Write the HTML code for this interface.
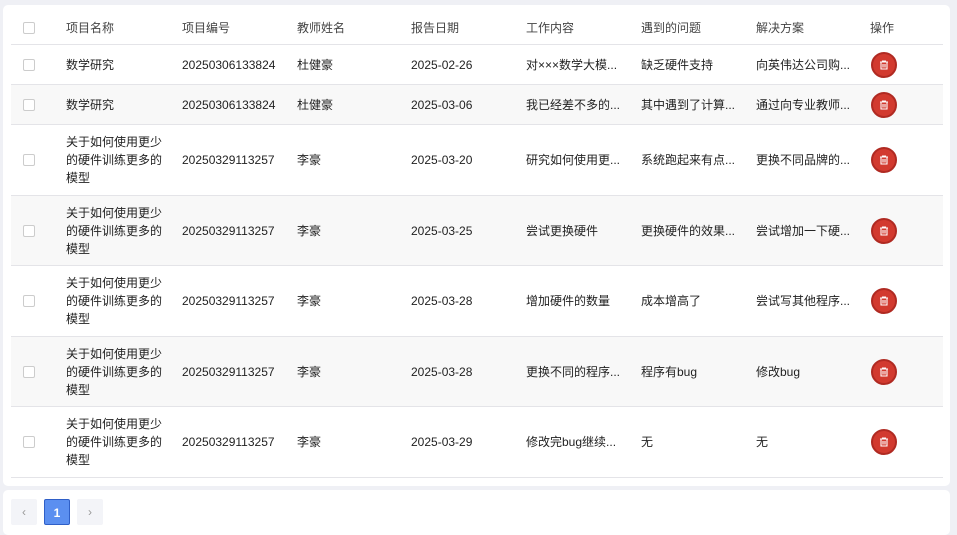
<!DOCTYPE html>
<html><head><meta charset="utf-8"><style>
*{box-sizing:border-box;margin:0;padding:0}
body{width:957px;height:527px;background:#eff0f5;font-family:"Liberation Sans","Noto Sans CJK SC",sans-serif;font-size:12px;color:#222;position:relative;overflow:hidden}
.card{position:absolute;left:3px;top:5px;width:947px;height:481px;background:#fff;border-radius:5px}
.pg{position:absolute;left:3px;top:490px;width:947px;height:45px;background:#fff;border-radius:5px}
.row{position:absolute;left:11px;width:932px;border-bottom:1px solid #e4e4e8}
.row.s{background:#f8f8f8}
.c{position:absolute;top:50%;transform:translateY(-50%);line-height:18px;white-space:nowrap}
.h .c{color:#444}
.cb{position:absolute;left:12px;top:50%;margin-top:-6px;width:12px;height:12px;border:1px solid #ccc;border-radius:2px;background:#fff}
.del{position:absolute;left:860px;top:50%;margin-top:-13px;width:26px;height:26px;border-radius:50%;background:#d23a2f;border:2px solid #b02a22}
.del svg{position:absolute;left:6px;top:6px}
.btn{position:absolute;top:9px;width:26px;height:26px;background:#f3f4f8;border-radius:2px;color:#999;text-align:center;line-height:26px;font-size:12px}
</style></head><body>
<div class="card"></div>
<div id="t"></div>
<div class="pg">
<div class="btn" style="left:8px">‹</div>
<div class="btn" style="left:41px;background:#5b8ff0;border:1px solid #2f5fc7;color:#fff;font-weight:bold">1</div>
<div class="btn" style="left:74px">›</div>
</div>
<script>
const X=[55,171,286,400,515,630,745];
const rows=[
["数学研究","20250306133824","杜健豪","2025-02-26","对×××数学大模...","缺乏硬件支持","向英伟达公司购..."],
["数学研究","20250306133824","杜健豪","2025-03-06","我已经差不多的...","其中遇到了计算...","通过向专业教师..."],
["关于如何使用更少<br>的硬件训练更多的<br>模型","20250329113257","李豪","2025-03-20","研究如何使用更...","系统跑起来有点...","更换不同品牌的..."],
["关于如何使用更少<br>的硬件训练更多的<br>模型","20250329113257","李豪","2025-03-25","尝试更换硬件","更换硬件的效果...","尝试增加一下硬..."],
["关于如何使用更少<br>的硬件训练更多的<br>模型","20250329113257","李豪","2025-03-28","增加硬件的数量","成本增高了","尝试写其他程序..."],
["关于如何使用更少<br>的硬件训练更多的<br>模型","20250329113257","李豪","2025-03-28","更换不同的程序...","程序有bug","修改bug"],
["关于如何使用更少<br>的硬件训练更多的<br>模型","20250329113257","李豪","2025-03-29","修改完bug继续...","无","无"]];
const Y=[[12,33],[45,40],[85,40],[125,71],[196,70],[266,71],[337,70],[407,71]];
let h='';
const hd=["项目名称","项目编号","教师姓名","报告日期","工作内容","遇到的问题","解决方案","操作"];
h+=`<div class="row h" style="top:${Y[0][0]}px;height:${Y[0][1]}px"><div class="cb"></div>`+hd.map((t,i)=>`<div class="c" style="left:${i<7?X[i]:859}px">${t}</div>`).join('')+'</div>';
rows.forEach((r,k)=>{const [y,hh]=Y[k+1];
h+=`<div class="row${k%2?' s':''}" style="top:${y}px;height:${hh}px"><div class="cb"></div>`+r.map((t,i)=>`<div class="c" style="left:${X[i]}px">${t}</div>`).join('')+
`<div class="del"><svg width="10" height="10" viewBox="0 0 10 10"><path d="M1 2H9M3.5 2V1H6.5V2M2 2.5V9H8V2.5M4 4V7.5M6 4V7.5" stroke="#fff" stroke-width="1.1" fill="none"/></svg></div></div>`;});
document.getElementById('t').innerHTML=h;
</script>
</body></html>
